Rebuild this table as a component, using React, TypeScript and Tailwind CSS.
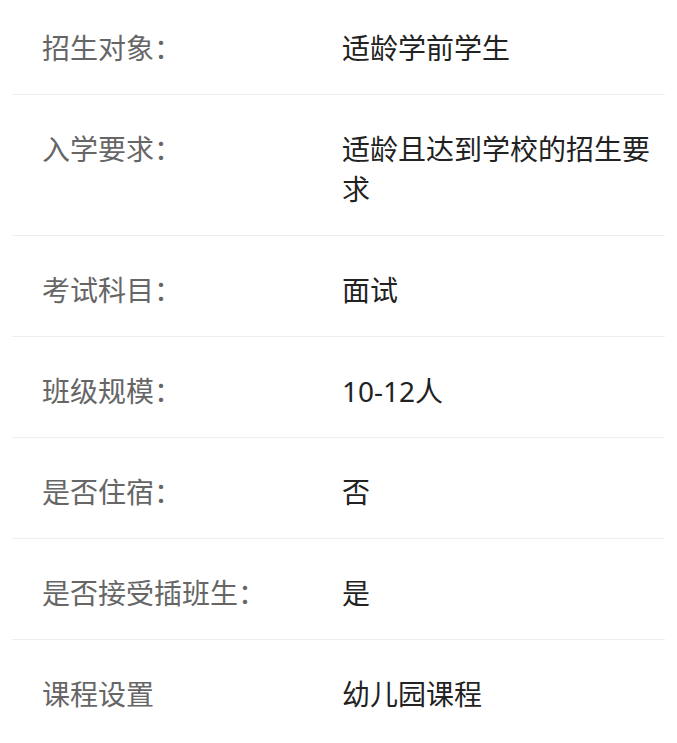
import React from "react";

const rows = [
    { label: "招生对象：", value: "适龄学前学生" },
    { label: "入学要求：", value: "适龄且达到学校的招生要求" },
    { label: "考试科目：", value: "面试" },
    { label: "班级规模：", value: "10-12人" },
    { label: "是否住宿：", value: "否" },
    { label: "是否接受插班生：", value: "是" },
    { label: "课程设置", value: "幼儿园课程" },
];

const App = () => {
    return (
        <div
            className="min-h-screen bg-white"
            style={{ fontFamily: '"Noto Sans", "Noto Sans CJK SC", sans-serif' }}
        >
            <div className="mx-3">
                {rows.map((row, index) => (
                    <div
                        key={index}
                        className={`flex text-[28px] leading-[40px] pb-[26px] ${index === 0 ? "pt-[28px]" : "pt-[34px]"} ${index < rows.length - 1 ? "border-b border-[#eeeeee]" : ""}`}
                    >
                        <div className="w-[330px] shrink-0 pl-[30px] text-[#666666]">{row.label}</div>
                        <div className="flex-1 pr-[6px] text-[#222222]">{row.value}</div>
                    </div>
                ))}
            </div>
        </div>
    );
};

export default App;
